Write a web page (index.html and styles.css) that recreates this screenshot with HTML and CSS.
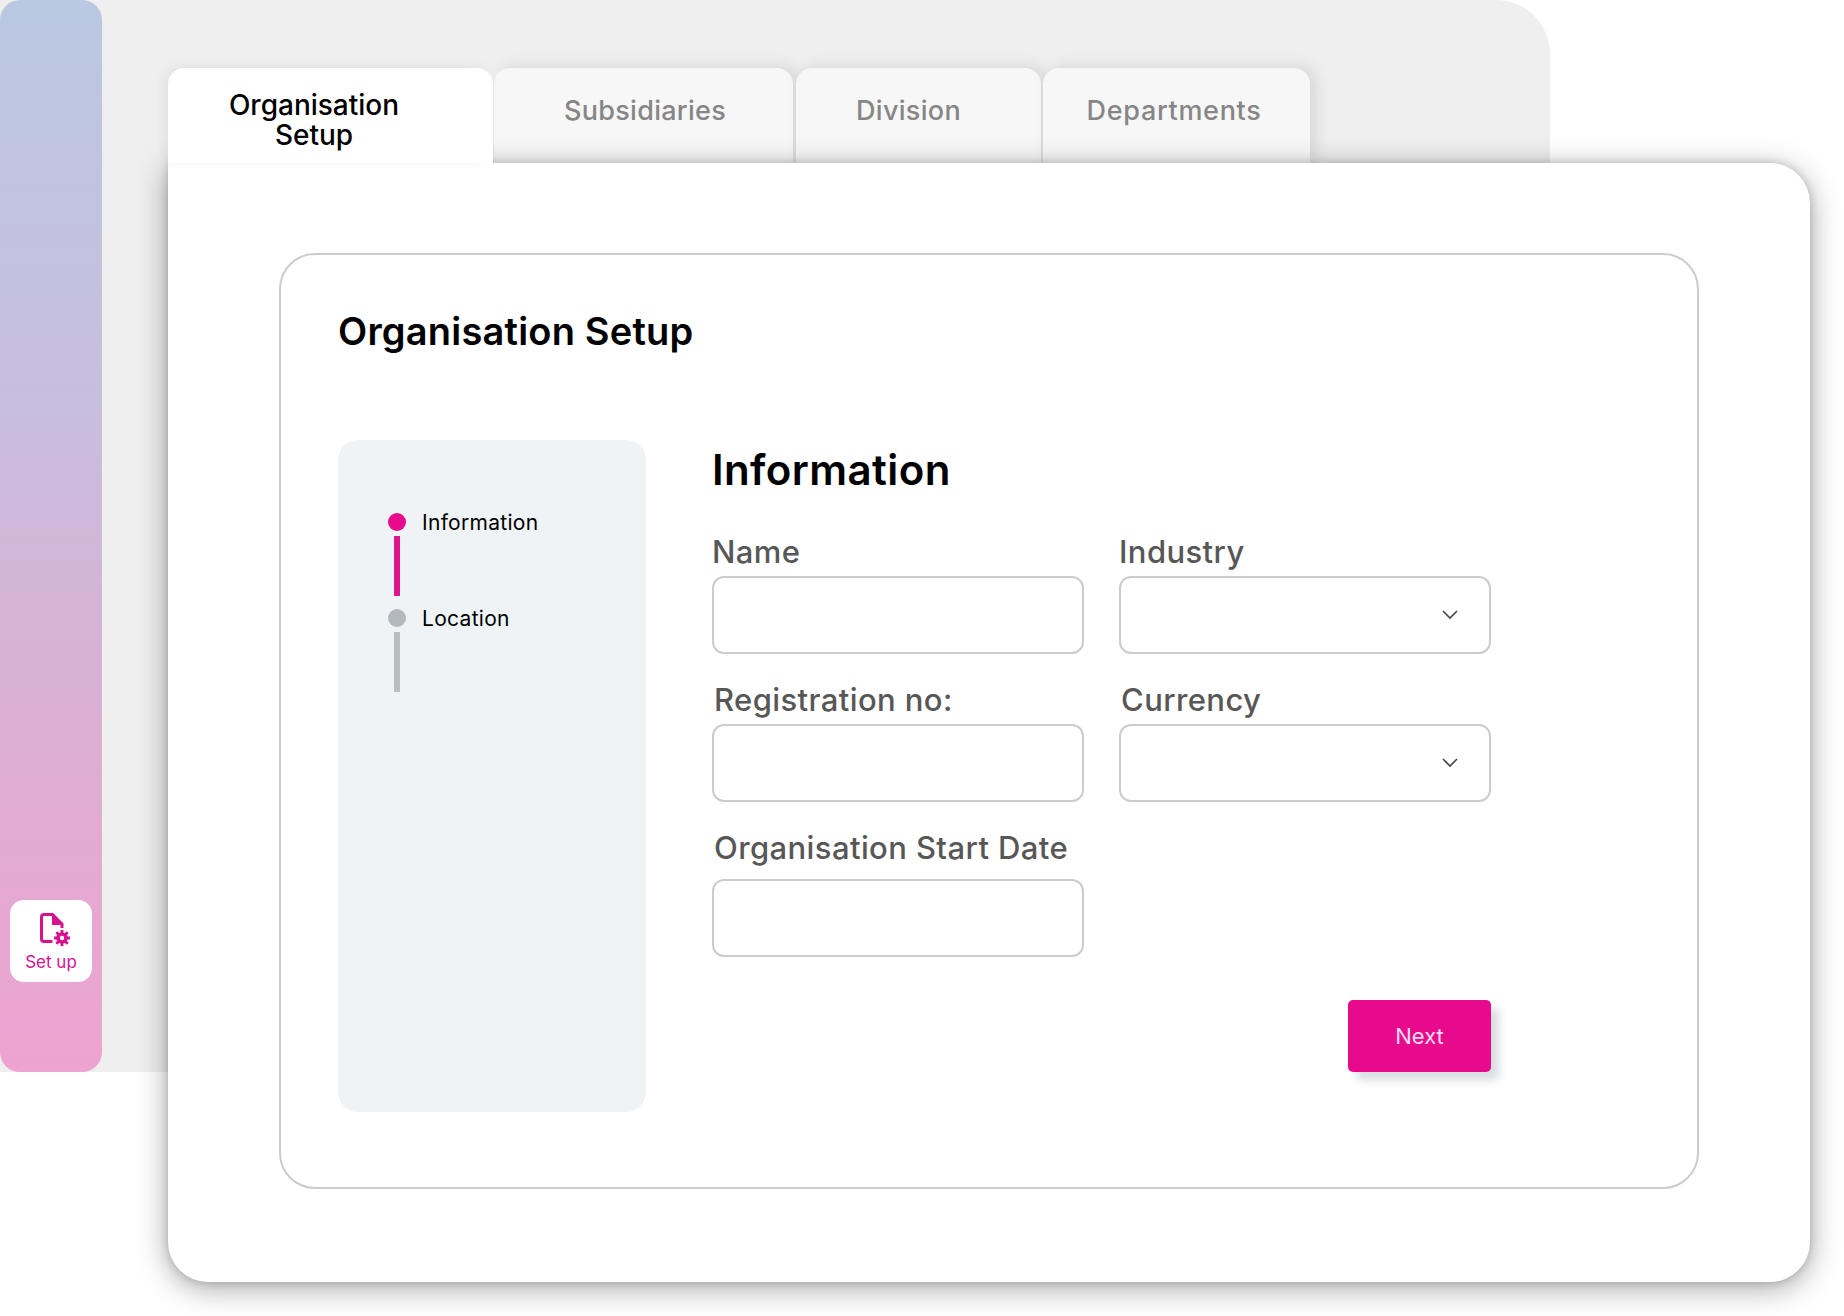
FILE: index.html
```html
<!DOCTYPE html>
<html lang="en">
<head>
<meta charset="utf-8">
<title>Organisation Setup</title>
<link rel="stylesheet" href="styles.css">
</head>
<body>
<div class="stage">
	<div class="backdrop">
		<div class="sidebar">
			<div class="nav-item">
				<svg class="nav-icon" width="34" height="36" viewBox="0 0 34 36">
					<path d="M14.500 29.500H6Q3.500 29.500 3.500 27V5Q3.500 2.500 6 2.500H14.500L24 12V16" fill="none" stroke="#d8128f" stroke-width="3"/>
					<path d="M14 1.500L25.500 13H14Z" fill="#d8128f"/>
					<circle cx="24" cy="26" r="5.800" fill="#d8128f"/>
					<path d="M24 18V34M16 26H32M18.300 20.300L29.700 31.700M29.700 20.300L18.300 31.700" stroke="#d8128f" stroke-width="2.800"/>
					<circle cx="24" cy="26" r="2.200" fill="#fff"/>
				</svg>
				<span class="nav-label">Set up</span>
			</div>
		</div>
	</div>

	<div class="main">
		<div class="tabs">
			<div class="tab tab-active">Organisation<br>Setup</div>
			<div class="tab tab-sub">Subsidiaries</div>
			<div class="tab tab-div">Division</div>
			<div class="tab tab-dep">Departments</div>
		</div>
		<div class="card">
			<div class="inner">
				<h1 class="title">Organisation Setup</h1>
				<div class="content">
					<div class="steps">
						<div class="step step-on">
							<div class="step-row"><i class="dot"></i><span>Information</span></div>
							<i class="bar"></i>
						</div>
						<div class="step">
							<div class="step-row"><i class="dot"></i><span>Location</span></div>
							<i class="bar"></i>
						</div>
					</div>
					<div class="form">
						<h2 class="form-title">Information</h2>
						<div class="fields">
							<div class="field">
								<label class="label">Name</label>
								<div class="input"></div>
							</div>
							<div class="field">
								<label class="label">Industry</label>
								<div class="input select">
									<svg width="16" height="10" viewBox="0 0 16 10"><path d="M1 1l7 7 7-7" fill="none" stroke="#444" stroke-width="1.600"/></svg>
								</div>
							</div>
							<div class="field">
								<label class="label label-shift">Registration no:</label>
								<div class="input"></div>
							</div>
							<div class="field">
								<label class="label label-shift">Currency</label>
								<div class="input select">
									<svg width="16" height="10" viewBox="0 0 16 10"><path d="M1 1l7 7 7-7" fill="none" stroke="#444" stroke-width="1.600"/></svg>
								</div>
							</div>
							<div class="field field-date">
								<label class="label label-shift">Organisation Start Date</label>
								<div class="input"></div>
							</div>
						</div>
						<div class="actions">
							<button class="btn-next">Next</button>
						</div>
					</div>
				</div>
			</div>
		</div>
	</div>
</div>
</body>
</html>
```

FILE: styles.css
```css
html,body{margin: 0;padding: 0;background: #fff;}
body{width: 1844px;height: 1316px;overflow: hidden;font-family: "Inter","Noto Sans",sans-serif;}
h1,h2{margin: 0;}

.stage{display: grid;width: 1844px;height: 1316px;}
.backdrop,.main{grid-area: 1 / 1;}

/* back panel + sidebar */
.backdrop{width: 1550px;height: 1072px;background: #efefef;border-top-right-radius: 54px;}
.sidebar{display: flex;flex-direction: column;justify-content: flex-end;box-sizing: border-box;width: 102px;height: 100%;padding: 0 10px 90px;border-radius: 20px;background: linear-gradient(180deg,#bac8e2 0%,#c8bedd 38%,#dcaed4 68%,#eea3d1 100%);}
.nav-item{display: flex;flex-direction: column;align-items: center;box-sizing: border-box;height: 82px;padding-top: 12px;border-radius: 14px;background: #fff;}
.nav-icon{margin-left: 8px;}
.nav-label{margin-top: 4px;font-size: 17px;line-height: 20px;color: #d8128f;}

/* tabs */
.main{display: flex;flex-direction: column;margin: 68px 34px 34px 168px;}
.tabs{display: flex;height: 95px;}
.tab{display: flex;align-items: center;justify-content: center;box-sizing: border-box;padding-bottom: 9px;border-radius: 16px 16px 0 0;background: #f7f7f7;font-size: 27px;font-weight: 500;line-height: 30px;letter-spacing: .3px;color: #868686;text-align: center;box-shadow: 6px -2px 16px rgba(0,0,0,.1);}
.tab-active{position: relative;z-index: 2;width: 325px;padding: 8px 33px 0 0;background: #fff;color: #000;font-size: 28px;letter-spacing: 0;box-shadow: -4px -2px 12px rgba(0,0,0,.06);}
.tab-sub{width: 299px;margin-left: 1px;padding-left: 3px;}
.tab-div{width: 245px;margin-left: 3px;padding-right: 20px;}
.tab-dep{width: 267px;margin-left: 2px;padding-right: 5px;letter-spacing: .7px;}

/* card */
.card{position: relative;z-index: 1;box-sizing: border-box;flex: 1;padding: 90px 111px 93px;border-radius: 0 40px 40px 40px;background: #fff;box-shadow: 0 6px 30px rgba(0,0,0,.36),0 0 8px rgba(0,0,0,.16);}
.inner{box-sizing: border-box;height: 100%;padding: 53px 57px 0;border: 2px solid #ccc;border-radius: 36px;}
.title{height: 132px;font-size: 38px;line-height: 47px;font-weight: 600;letter-spacing: .2px;color: #000;}

.content{display: flex;}
.steps{box-sizing: border-box;width: 308px;height: 672px;padding: 73px 0 0 50px;border-radius: 20px;background: #eff3f6;}
.step{display: flex;flex-direction: column;height: 96px;}
.step-row{display: flex;align-items: center;height: 18px;font-size: 21px;letter-spacing: .3px;color: #000;}
.step-row span{margin-left: 16px;}
.dot{flex: none;width: 18px;height: 18px;border-radius: 50%;background: #b3b8bc;}
.bar{width: 6px;height: 60px;margin: 5px 0 0 6px;background: #b9bcc0;}
.step-on .dot{background: #e80a8c;}
.step-on .bar{background: #e0148f;}

/* form */
.form{width: 779px;margin-left: 66px;}
.form-title{height: 61px;font-size: 42px;line-height: 59px;font-weight: 600;letter-spacing: .4px;color: #000;}
.fields{display: grid;grid-template-columns: 372px 372px;column-gap: 35px;margin-top: 31px;}
.field{display: flex;flex-direction: column;height: 148px;}
.field-date{height: 172px;}
.field-date .label{margin-bottom: 7px;}
.label{flex: none;height: 44px;font-size: 31px;font-weight: 500;line-height: 40px;letter-spacing: .4px;color: #575757;}
.label-shift{padding-left: 2px;}
.input{flex: none;box-sizing: border-box;height: 78px;border: 2px solid #ccc;border-radius: 12px;background: #fff;}
.select{display: flex;align-items: center;justify-content: flex-end;padding-right: 31px;}
.actions{display: flex;justify-content: flex-end;width: 779px;}
.btn-next{width: 143px;height: 72px;padding: 0;border: 0;border-radius: 5px;background: #e80a8c;color: #fbdcf0;font-family: inherit;font-size: 22px;box-shadow: 8px 8px 10px rgba(80,90,120,.22);}
```
